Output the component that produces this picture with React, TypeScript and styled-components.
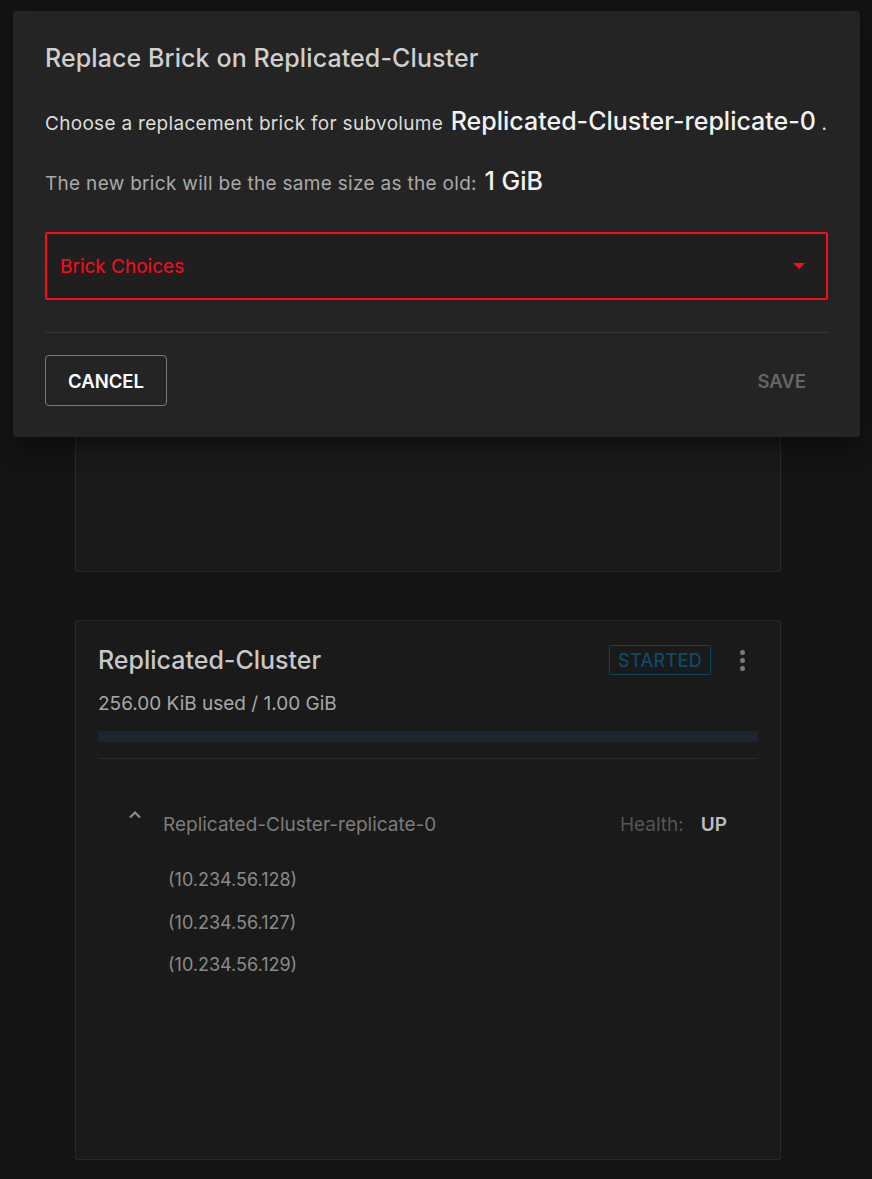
import React from "react";
import styled, { createGlobalStyle } from "styled-components";

const Global = createGlobalStyle`
  html, body { margin: 0; padding: 0; background: #141414; }
  body { font-family: Inter, "Noto Sans", sans-serif; -webkit-font-smoothing: antialiased; }
  * { box-sizing: border-box; }
`;

const Page = styled.div`
  position: relative;
  width: 872px;
  height: 1179px;
  overflow: hidden;
  background: #141414;
  padding: 30px 91px 0 75px;
  display: flex;
  flex-direction: column;
  gap: 48px;
`;

const Card = styled.section<{ $h: number }>`
  height: ${(p) => p.$h}px;
  flex-shrink: 0;
  background: #1a1a1a;
  border: 1px solid #2a2a2a;
  border-radius: 2px;
  padding: 22px 22px 0 22px;
  display: flex;
  flex-direction: column;
`;

const CardHeader = styled.div`
  display: flex;
  align-items: center;
  justify-content: space-between;
  height: 32px;
  margin-top: 1px;
`;

const CardTitle = styled.h2`
  margin: 0;
  font-size: 25px;
  font-weight: 500;
  color: #c8c8c8;
`;

const HeaderRight = styled.div`
  display: flex;
  align-items: center;
  gap: 23px;
  margin-right: 8px;
`;

const Badge = styled.span`
  display: inline-flex;
  align-items: center;
  justify-content: center;
  height: 30px;
  width: 102px;
  border: 1px solid #0b4461;
  border-radius: 2px;
  color: #0d4a69;
  font-size: 18px;
  font-weight: 500;
  letter-spacing: 0.3px;
`;

const Kebab = styled.span`
  display: flex;
  flex-direction: column;
  gap: 3px;
  width: 16px;
  align-items: center;
  span {
    width: 5px;
    height: 5px;
    border-radius: 50%;
    background: #7a7a7a;
  }
`;

const Usage = styled.div`
  margin-top: 16px;
  font-size: 19px;
  line-height: 24px;
  color: #a8a8a8;
`;

const Bar = styled.div`
  margin-top: 15px;
  height: 11px;
  background: #1c2633;
`;

const Divider = styled.hr<{ $c?: string; $mt?: number }>`
  margin: ${(p) => p.$mt ?? 16}px 0 0;
  border: 0;
  height: 1px;
  background: ${(p) => p.$c ?? "#2a2a2a"};
`;

const Sub = styled.div`
  padding: 49px 0 0 28px;
  display: flex;
  flex-direction: column;
`;

const SubRow = styled.div`
  display: flex;
  align-items: center;
  height: 32px;
  padding-right: 31px;
`;

const Chevron = styled.svg`
  width: 20px;
  height: 20px;
  margin-left: -1px;
  margin-right: 18px;
  margin-top: -19px;
`;

const SubName = styled.span`
  font-size: 19px;
  color: #7c7c7c;
  flex: 1;
`;

const HealthLabel = styled.span`
  font-size: 19px;
  color: #555;
  margin-right: 17px;
`;

const Health = styled.span`
  font-size: 19px;
  font-weight: 600;
  color: #bdbdbd;
`;

const IpList = styled.ul`
  list-style: none;
  margin: 19px 0 0 42px;
  padding: 0;
  display: flex;
  flex-direction: column;
`;

const Ip = styled.li`
  font-size: 18px;
  color: #8a8a8a;
  height: 42.5px;
  line-height: 42.5px;
`;

/* Dialog */
const Dialog = styled.div`
  position: absolute;
  left: 13px;
  top: 11px;
  width: 847px;
  height: 426px;
  background: #242424;
  border-radius: 4px;
  box-shadow: 0 8px 24px rgba(0, 0, 0, 0.5);
  padding: 31px 32px 0 32px;
  display: flex;
  flex-direction: column;
`;

const DialogTitle = styled.h1`
  margin: 0;
  font-size: 25px;
  font-weight: 500;
  color: #cfcfcf;
  line-height: 32px;
  letter-spacing: 0.1px;
`;

const Line = styled.p<{ $mt: number; $c: string }>`
  margin: ${(p) => p.$mt}px 0 0;
  font-size: 19px;
  color: ${(p) => p.$c};
  line-height: 32px;
  height: 32px;
  white-space: nowrap;
  letter-spacing: 0.3px;
`;

const Strong = styled.span`
  font-size: 25px;
  font-weight: 500;
  color: #f2f2f2;
  letter-spacing: 0;
  line-height: 1;
  margin-left: 2px;
`;

const Select = styled.div`
  margin-top: 32px;
  height: 68px;
  border: 2px solid #ff0a1a;
  border-radius: 2px;
  background: #1f1f1f;
  display: flex;
  align-items: center;
  justify-content: space-between;
  padding: 0 21px 0 13px;
`;

const SelectText = styled.span`
  color: #ff0a1a;
  font-size: 19px;
`;

const Caret = styled.span`
  width: 0;
  height: 0;
  border-left: 6px solid transparent;
  border-right: 6px solid transparent;
  border-top: 6px solid #ff0a1a;
`;

const Actions = styled.div`
  margin-top: 22px;
  display: flex;
  align-items: center;
  justify-content: space-between;
`;

const OutlineButton = styled.button`
  height: 51px;
  width: 122px;
  background: transparent;
  border: 1px solid #7a7a7a;
  border-radius: 4px;
  color: #ffffff;
  font-family: inherit;
  font-size: 18.5px;
  font-weight: 600;
`;

const TextButton = styled.button`
  background: transparent;
  border: 0;
  color: #666;
  font-family: inherit;
  font-size: 18.5px;
  font-weight: 600;
  padding: 0 22px;
`;

export default function App() {
  const ips = ["(10.234.56.128)", "(10.234.56.127)", "(10.234.56.129)"];
  return (
    <>
      <Global />
      <Page>
        <Card $h={542} />
        <Card $h={540}>
          <CardHeader>
            <CardTitle>Replicated-Cluster</CardTitle>
            <HeaderRight>
              <Badge>STARTED</Badge>
              <Kebab>
                <span />
                <span />
                <span />
              </Kebab>
            </HeaderRight>
          </CardHeader>
          <Usage>256.00 KiB used / 1.00 GiB</Usage>
          <Bar />
          <Divider />
          <Sub>
            <SubRow>
              <Chevron viewBox="0 0 24 24" fill="none">
                <path d="M6 15l6-6 6 6" stroke="#8a8a8a" strokeWidth="2.6" />
              </Chevron>
              <SubName>Replicated-Cluster-replicate-0</SubName>
              <HealthLabel>Health:</HealthLabel>
              <Health>UP</Health>
            </SubRow>
            <IpList>
              {ips.map((ip) => (
                <Ip key={ip}>{ip}</Ip>
              ))}
            </IpList>
          </Sub>
        </Card>
        <Dialog>
          <DialogTitle>Replace Brick on Replicated-Cluster</DialogTitle>
          <Line $mt={34} $c="#dcdcdc">
            Choose a replacement brick for subvolume{" "}
            <Strong>Replicated-Cluster-replicate-0</Strong> .
          </Line>
          <Line $mt={28} $c="#a9a9a9">
            The new brick will be the same size as the old:{" "}
            <Strong>1 GiB</Strong>
          </Line>
          <Select>
            <SelectText>Brick Choices</SelectText>
            <Caret />
          </Select>
          <Divider $c="#383838" $mt={32} />
          <Actions>
            <OutlineButton>CANCEL</OutlineButton>
            <TextButton>SAVE</TextButton>
          </Actions>
        </Dialog>
      </Page>
    </>
  );
}
